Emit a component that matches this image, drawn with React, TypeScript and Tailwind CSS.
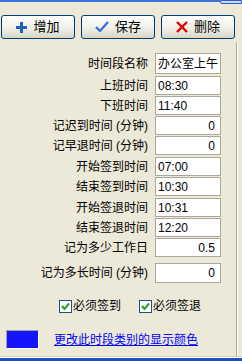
import React from 'react';

const FONT = { fontFamily: '"Liberation Sans", "Noto Sans CJK SC", sans-serif' };

interface Field {
  label: string;
  value: string;
  align: 'left' | 'right';
  rowH: string;
  boxH: string;
}

const fields: Field[] = [
  { label: '时间段名称', value: '办公室上午', align: 'left', rowH: 'h-[23px]', boxH: 'h-[21px]' },
  { label: '上班时间', value: '08:30', align: 'left', rowH: 'h-[20px]', boxH: 'h-[19px]' },
  { label: '下班时间', value: '11:40', align: 'left', rowH: 'h-[20px]', boxH: 'h-[19px]' },
  { label: '记迟到时间 (分钟)', value: '0', align: 'right', rowH: 'h-[20px]', boxH: 'h-[19px]' },
  { label: '记早退时间 (分钟)', value: '0', align: 'right', rowH: 'h-[21px]', boxH: 'h-[19px]' },
  { label: '开始签到时间', value: '07:00', align: 'left', rowH: 'h-[20px]', boxH: 'h-[19px]' },
  { label: '结束签到时间', value: '10:30', align: 'left', rowH: 'h-[21px]', boxH: 'h-[19px]' },
  { label: '开始签退时间', value: '10:31', align: 'left', rowH: 'h-[20px]', boxH: 'h-[19px]' },
  { label: '结束签退时间', value: '12:20', align: 'left', rowH: 'h-[20px]', boxH: 'h-[19px]' },
  { label: '记为多少工作日', value: '0.5', align: 'right', rowH: 'h-[25px]', boxH: 'h-[19px]' },
  { label: '记为多长时间 (分钟)', value: '0', align: 'right', rowH: 'h-[21px]', boxH: 'h-[20px]' },
];

const PlusIcon = () => (
  <svg width="11" height="11" viewBox="0 0 11 11">
    <rect x="4" y="0" width="3" height="11" fill="#1f5fbf" />
    <rect x="0" y="4" width="11" height="3" fill="#1f5fbf" />
  </svg>
);

const CheckIcon = () => (
  <svg width="14" height="12" viewBox="0 0 14 12">
    <path d="M1 6 L5 10 L13 1" fill="none" stroke="#3a72d6" strokeWidth="2.4" strokeLinejoin="round" />
  </svg>
);

const CrossIcon = () => (
  <svg width="12" height="12" viewBox="0 0 12 12">
    <path d="M1 1 L11 11 M11 1 L1 11" stroke="#e00000" strokeWidth="2.4" />
  </svg>
);

const XpButton: React.FC<{ icon: React.ReactNode; label: string }> = ({ icon, label }) => (
  <button className="w-[74px] h-[24px] flex items-center justify-center gap-[6px] rounded-[3px] border border-[#003c74] bg-gradient-to-b from-[#fefefe] via-[#f2f1ea] to-[#d9d6c8] text-[13px] text-black">
    {icon}
    <span>{label}</span>
  </button>
);

const XpCheck: React.FC<{ label: string }> = ({ label }) => (
  <div className="flex items-center">
    <div className="w-[13px] h-[13px] border border-[#1c5180] bg-white flex items-center justify-center">
      <svg width="9" height="9" viewBox="0 0 9 9">
        <path d="M1 4 L3.5 7 L8 1.5" fill="none" stroke="#21a121" strokeWidth="2" />
      </svg>
    </div>
    <span className="ml-[1px] text-[12px] text-black">{label}</span>
  </div>
);

export default function App() {
  return (
    <div className="w-[242px] h-[361px] bg-[#ece9d8] flex flex-col overflow-hidden" style={FONT}>
      <div className="flex h-[4px]">
        <div className="flex-1 border-t-[2px] border-[#3b72d8]" />
        <div className="w-[22px] h-[4px] border border-[#2c5cc4] bg-[#c9d9f5] rounded-bl-[2px]" />
      </div>

      <div className="flex gap-[6px] pl-[1px] mt-[11px]">
        <XpButton icon={<PlusIcon />} label="增加" />
        <XpButton icon={<CheckIcon />} label="保存" />
        <XpButton icon={<CrossIcon />} label="删除" />
      </div>

      <div className="flex flex-1 mt-[3px]">
        <div className="w-[237px] flex flex-col border-r border-[#aca899]">
          <div className="flex flex-col mt-[11px]">
            {fields.map((f) => (
              <div key={f.label} className={`flex items-start ${f.rowH}`}>
                <div className={`w-[149px] pr-[1px] text-right text-[12px] text-black flex items-center justify-end ${f.boxH}`}>
                  {f.label}
                </div>
                <div
                  className={`ml-[6px] w-[66px] ${f.boxH} bg-white border border-[#aca899] flex items-center px-[2px] text-[12px] text-black ${
                    f.align === 'right' ? 'justify-end pr-[5px]' : 'justify-start'
                  }`}
                >
                  {f.value}
                </div>
              </div>
            ))}
          </div>

          <div className="flex items-center gap-[18px] pl-[59px] mt-[13px]">
            <XpCheck label="必须签到" />
            <XpCheck label="必须签退" />
          </div>

          <div className="flex items-center mt-[15px] pl-[6px]">
            <div className="w-[33px] h-[19px] bg-[#1414ff] border-t border-l border-[#a0a0a0] border-b border-r border-b-white border-r-white" />
            <a className="ml-[15px] text-[12px] text-[#0000ff] underline">更改此时段类别的显示颜色</a>
          </div>
        </div>
        <div className="w-[1px] bg-white" />
      </div>

      <div className="h-[1px] bg-[#d6d2c2]" />
      <div className="h-[1px] bg-[#ffffff]" />
      <div className="h-[3px] bg-[#1c4fc4]" />
    </div>
  );
}
